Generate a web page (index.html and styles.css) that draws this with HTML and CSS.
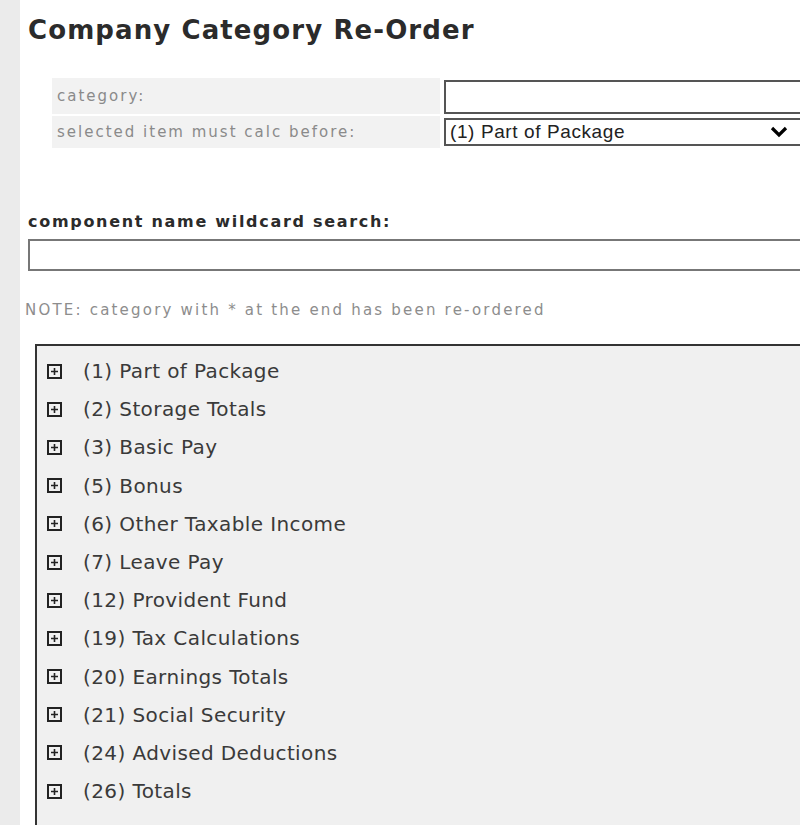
FILE: index.html
```html
<!DOCTYPE html>
<html lang="en">
  <head>
    <meta charset="UTF-8" />
    <meta name="viewport" content="width=device-width, initial-scale=1.0" />
    <title>Company Category Re-Order</title>
    <link rel="stylesheet" href="styles.css">
  </head>
  <body>
    <div class="side"></div>

    <div class="main">
      <h1>Company Category Re-Order</h1>

      <!-- category form -->
      <div class="form-grid">
        <div class="label">category:</div>
        <div class="field"><input type="text" class="text-input" /></div>
        <div class="label">selected item must calc before:</div>
        <div class="field">
          <div class="select">
            <span>(1) Part of Package</span>
            <svg class="chevron" width="18" height="12" viewBox="0 0 18 12">
              <path d="M2 2 L9 9 L16 2" fill="none" stroke="#000" stroke-width="3.2" />
            </svg>
          </div>
        </div>
      </div>

      <div class="search-label">component name wildcard search:</div>
      <input type="text" class="search-input" />

      <p class="note">NOTE: category with * at the end has been re-ordered</p>

      <!-- category tree -->
      <div class="tree">
        <ul id="tree-list"></ul>
      </div>
    </div>

    <script>
      const categories = [
        "(1) Part of Package",
        "(2) Storage Totals",
        "(3) Basic Pay",
        "(5) Bonus",
        "(6) Other Taxable Income",
        "(7) Leave Pay",
        "(12) Provident Fund",
        "(19) Tax Calculations",
        "(20) Earnings Totals",
        "(21) Social Security",
        "(24) Advised Deductions",
        "(26) Totals",
      ];

      const list = document.getElementById("tree-list");
      categories.forEach((name) => {
        let li = document.createElement("li");
        li.innerHTML =
          '<span class="toggle"><svg width="15" height="15" viewBox="0 0 15 15">' +
          '<rect x="1" y="1" width="13" height="13" fill="none" stroke="#222" stroke-width="2" />' +
          '<path d="M7.5 4 V11 M4 7.5 H11" stroke="#222" stroke-width="1.6" /></svg></span>' +
          '<span class="name">' + name + "</span>";
        list.appendChild(li);
      });
    </script>
  </body>
</html>
```

FILE: styles.css
```css
* {
  margin: 0;
  padding: 0;
  box-sizing: border-box;
}

body {
  font-family: "DejaVu Sans", Verdana, sans-serif;
  background-color: #fff;
  color: #333;
  display: flex;
  height: 825px;
  overflow: hidden;
}

.side {
  width: 20px;
  flex-shrink: 0;
  background-color: #ebebeb;
}

.main {
  flex: 1;
  padding-left: 8px;
  min-width: 0;
}

h1 {
  font-size: 26px;
  font-weight: bold;
  letter-spacing: 1.1px;
  color: #2b2b2b;
  margin-top: 13px;
  line-height: 34px;
}

.form-grid {
  display: grid;
  grid-template-columns: 388px 390px;
  grid-template-rows: 36px 32px;
  column-gap: 4px;
  row-gap: 2px;
  margin: 31px 0 0 24px;
  width: 800px;
}

.label {
  background-color: #f2f2f2;
  color: #8a8a8a;
  font-size: 15px;
  letter-spacing: 2px;
  padding-left: 5px;
  display: flex;
  align-items: center;
}

.field {
  padding-top: 2px;
}

.text-input {
  width: 100%;
  height: 34px;
  border: 2px solid #555;
  background: #fff;
}

.select {
  height: 28px;
  border: 2px solid #555;
  background: #fff;
  display: flex;
  align-items: center;
  justify-content: space-between;
  padding: 0 34px 0 4px;
  font-family: "Liberation Sans", Arial, sans-serif;
  font-size: 19px;
  letter-spacing: 0.6px;
  color: #222;
  width: 380px;
}

.search-label {
  font-weight: bold;
  font-size: 16px;
  letter-spacing: 1.7px;
  color: #2b2b2b;
  margin-top: 64px;
}

.search-input {
  display: block;
  width: 800px;
  height: 32px;
  border: 2px solid #777;
  margin-top: 8px;
}

.note {
  font-size: 15px;
  letter-spacing: 2.2px;
  color: #8d8d8d;
  margin: 30px 0 0 -3px;
}

.tree {
  margin: 25px 0 0 7px;
  border-top: 2px solid #333;
  border-left: 2px solid #333;
  background-color: #f0f0f0;
  height: 500px;
  width: 800px;
  padding: 6px 0 0 10px;
}

.tree ul {
  list-style: none;
}

.tree li {
  display: flex;
  align-items: center;
  height: 38.2px;
}

.toggle {
  display: flex;
  width: 36px;
}

.name {
  font-size: 20px;
  letter-spacing: 0.4px;
  color: #3a3a3a;
}
```
